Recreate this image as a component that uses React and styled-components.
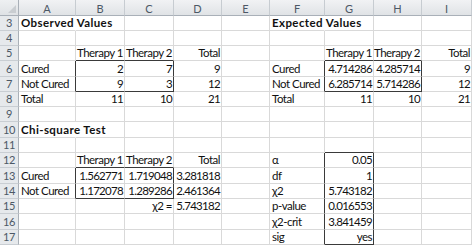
import React from 'react';
import styled, { createGlobalStyle } from 'styled-components';

const GlobalStyle = createGlobalStyle`
  html, body {
    margin: 0;
    padding: 0;
    background: #ffffff;
  }
`;

const COLS = [19, 57, 49, 49, 48, 48, 55, 49, 48, 50];
const ROW_HEIGHTS = [15, 15, 15, 16, 15, 15, 15, 16, 15, 15, 16, 15, 15, 16, 15];
const LETTERS = ['A', 'B', 'C', 'D', 'E', 'F', 'G', 'H', 'I'];

// boxes drawn with dark borders: [firstRow, lastRow, firstCol, lastCol] (cols: A = 1)
const BOXES = [
  [6, 7, 2, 3],
  [6, 7, 7, 8],
  [13, 14, 2, 3],
  [12, 17, 7, 7],
];

// cell contents: row -> { col: [text, align, bold, span] }
const DATA = {
  3: { 1: ['Observed Values', 'left', true, true], 6: ['Expected Values', 'left', true, true] },
  5: { 2: ['Therapy 1', 'right'], 3: ['Therapy 2', 'right'], 4: ['Total', 'right'], 7: ['Therapy 1', 'right'], 8: ['Therapy 2', 'right'], 9: ['Total', 'right'] },
  6: { 1: ['Cured'], 2: ['2', 'right'], 3: ['7', 'right'], 4: ['9', 'right'], 6: ['Cured'], 7: ['4.714286', 'right'], 8: ['4.285714', 'right'], 9: ['9', 'right'] },
  7: { 1: ['Not Cured'], 2: ['9', 'right'], 3: ['3', 'right'], 4: ['12', 'right'], 6: ['Not Cured'], 7: ['6.285714', 'right'], 8: ['5.714286', 'right'], 9: ['12', 'right'] },
  8: { 1: ['Total'], 2: ['11', 'right'], 3: ['10', 'right'], 4: ['21', 'right'], 6: ['Total'], 7: ['11', 'right'], 8: ['10', 'right'], 9: ['21', 'right'] },
  10: { 1: ['Chi-square Test', 'left', true, true] },
  12: { 2: ['Therapy 1', 'right'], 3: ['Therapy 2', 'right'], 4: ['Total', 'right'], 6: ['α'], 7: ['0.05', 'right'] },
  13: { 1: ['Cured'], 2: ['1.562771', 'right'], 3: ['1.719048', 'right'], 4: ['3.281818', 'right'], 6: ['df'], 7: ['1', 'right'] },
  14: { 1: ['Not Cured'], 2: ['1.172078', 'right'], 3: ['1.289286', 'right'], 4: ['2.461364', 'right'], 6: ['χ2'], 7: ['5.743182', 'right'] },
  15: { 3: ['χ2 =', 'right'], 4: ['5.743182', 'right'], 6: ['p-value'], 7: ['0.016553', 'right'] },
  16: { 6: ['χ2-crit'], 7: ['3.841459', 'right'] },
  17: { 6: ['sig'], 7: ['yes', 'right'] },
};

const inBox = (r, c) => BOXES.find(([r1, r2, c1, c2]) => r >= r1 && r <= r2 && c >= c1 && c <= c2);
const isNumber = (s) => /^[\d.]+$/.test(s);

const Sheet = styled.div`
  display: grid;
  grid-template-columns: ${COLS.map((w) => `${w}px`).join(' ')};
  grid-template-rows: 16px ${ROW_HEIGHTS.map((h) => `${h}px`).join(' ')};
  width: 472px;
  height: 245px;
  overflow: hidden;
  font-family: Lato, 'Liberation Sans', sans-serif;
  font-size: 11.5px;
  color: #111;
`;

const Corner = styled.div`
  box-sizing: border-box;
  position: relative;
  background: linear-gradient(#eef0f2, #dfe2e5);
  border-right: 1px solid #a9b0b8;
  border-bottom: 1px solid #a9b0b8;
  &::after {
    content: '';
    position: absolute;
    right: 2px;
    bottom: 2px;
    border-left: 8px solid transparent;
    border-bottom: 8px solid #c9cdd1;
  }
`;

const ColHead = styled.div`
  box-sizing: border-box;
  background: linear-gradient(#f1f2f4, #e0e3e6);
  border-right: 1px solid #c7ccd1;
  border-bottom: 1px solid #a9b0b8;
  color: #4c5866;
  font-size: 11px;
  display: flex;
  align-items: center;
  justify-content: center;
  padding-top: 1px;
`;

const RowHead = styled.div`
  box-sizing: border-box;
  background: #e6e9ec;
  border-right: 1px solid #a9b0b8;
  border-bottom: 1px solid #c9ced3;
  color: #4c5866;
  font-size: 11px;
  letter-spacing: -0.3px;
  display: flex;
  align-items: flex-end;
  justify-content: center;
  line-height: 14px;
`;

const Cell = styled.div`
  box-sizing: border-box;
  border-right: 1px solid ${({ $right }) => $right};
  border-bottom: 1px solid ${({ $bottom }) => $bottom};
  display: flex;
  align-items: flex-end;
  justify-content: ${({ $align }) => ($align === 'right' ? 'flex-end' : 'flex-start')};
  padding: 0 1px 0 2px;
  line-height: 14px;
  white-space: nowrap;
  overflow: visible;
  font-weight: ${({ $bold }) => ($bold ? 700 : 400)};
  letter-spacing: ${({ $num, $bold }) => ($num ? '-0.7px' : $bold ? '0.4px' : '-0.5px')};
  position: relative;
  z-index: ${({ $span }) => ($span ? 1 : 0)};
`;

const GRID = '#d9d9d9';
const DARK = '#3a3a3a';

function cellBorders(r, c) {
  let right = GRID;
  let bottom = GRID;
  const here = inBox(r, c);
  if (here && c === here[3]) right = DARK;
  const next = inBox(r, c + 1);
  if (next && c + 1 === next[2]) right = DARK;
  if (here && r === here[1]) bottom = DARK;
  const below = inBox(r + 1, c);
  if (below && r + 1 === below[0]) bottom = DARK;
  const row = DATA[r] || {};
  if (row[c] && row[c][3]) right = 'transparent';
  return { right, bottom };
}

export default function App() {
  const rows = ROW_HEIGHTS.map((_, i) => i + 3);
  return (
    <>
      <GlobalStyle />
      <Sheet>
        <Corner />
        {LETTERS.map((l) => (
          <ColHead key={l}>{l}</ColHead>
        ))}
        {rows.map((r) => (
          <React.Fragment key={r}>
            <RowHead>{r}</RowHead>
            {LETTERS.map((_, i) => {
              const c = i + 1;
              const item = (DATA[r] || {})[c];
              const { right, bottom } = cellBorders(r, c);
              return (
                <Cell
                  key={c}
                  $right={right}
                  $bottom={bottom}
                  $align={item ? item[1] : 'left'}
                  $bold={item ? item[2] : false}
                  $span={item ? item[3] : false}
                  $num={item ? isNumber(item[0]) : false}
                >
                  {item ? item[0] : ''}
                </Cell>
              );
            })}
          </React.Fragment>
        ))}
      </Sheet>
    </>
  );
}
